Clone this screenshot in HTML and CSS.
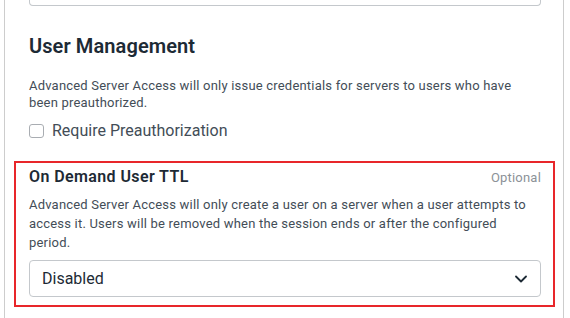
FILE: index.html
```html
<!DOCTYPE html>
<html lang="en">
<head>
    <meta charset="UTF-8">
    <meta name="viewport" content="width=device-width, initial-scale=1.0">
    <title>Server Access Settings</title>
    <link rel="stylesheet" href="styles.css">
</head>
<body>
    <div class="card">
        <div class="input-stub"></div>

        <div class="section">
            <h2>User Management</h2>
            <p class="help">Advanced Server Access will only issue credentials for servers to users who have been preauthorized.</p>
            <label class="checkbox">
                <input type="checkbox" id="preauth">
                <span>Require Preauthorization</span>
            </label>
        </div>

        <div class="field highlighted">
            <div class="field-header">
                <label for="ttl">On Demand User TTL</label>
                <span class="optional">Optional</span>
            </div>
            <p class="help">Advanced Server Access will only create a user on a server when a user attempts to access it. Users will be removed when the session ends or after the configured period.</p>
            <div class="select-wrap">
                <select id="ttl">
                    <option>Disabled</option>
                    <option>1 hour</option>
                    <option>8 hours</option>
                    <option>24 hours</option>
                </select>
                <svg class="chevron" width="12" height="8" viewBox="0 0 12 8">
                    <polyline points="1,1.5 6,6.5 11,1.5" fill="none" stroke="#1d2a35" stroke-width="1.8" stroke-linecap="round" stroke-linejoin="round"/>
                </svg>
            </div>
        </div>
    </div>
</body>
</html>
```

FILE: styles.css
```css
:root {
    --heading-color: #1d2a35;
    --text-color: #434d57;
    --muted-color: #8c9298;
    --border-color: #c4c8cc;
    --card-border: #cdcdcd;
    --highlight: #e8262a;
}

body {
    margin: 0;
    font-family: Roboto, "Noto Sans", sans-serif;
    color: var(--text-color);
    background: white;
    overflow: hidden;
}

.card {
    margin: 0 6px 0 4px;
    padding: 0 8px 40px 9px;
    border-left: 1px solid var(--card-border);
    border-right: 1px solid var(--card-border);
    height: 318px;
    box-sizing: border-box;
}

.input-stub {
    margin: 0 14px 0 15px;
    height: 5px;
    border: 1px solid var(--border-color);
    border-top: none;
    border-radius: 0 0 4px 4px;
}

.section {
    padding: 28px 14px 0 15px;
}

h2 {
    margin: 0;
    font-size: 20px;
    line-height: 24px;
    font-weight: 600;
    letter-spacing: 0.1px;
    color: var(--heading-color);
}

.help {
    margin: 0;
    font-size: 13px;
    line-height: 18px;
    letter-spacing: 0.2px;
}

.section .help {
    margin-top: 19px;
    line-height: 17px;
}

.checkbox {
    display: flex;
    align-items: center;
    gap: 8px;
    margin-top: 10px;
    font-size: 16px;
    line-height: 20px;
}

.checkbox input {
    appearance: none;
    margin: 0;
    width: 15px;
    height: 14px;
    border: 1.5px solid #a9adb2;
    border-radius: 3px;
}

.field {
    padding: 4px 14px 8px 15px;
}

.field.highlighted {
    margin: 20px 0 0 0;
    padding: 4px 12px 8px 13px;
    border: 2px solid var(--highlight);
}

.field-header {
    display: flex;
    justify-content: space-between;
    align-items: baseline;
}

.field-header label {
    font-size: 16px;
    line-height: 20px;
    font-weight: 600;
    letter-spacing: 0.4px;
    color: var(--heading-color);
}

.optional {
    font-size: 13px;
    letter-spacing: 0.2px;
    color: var(--muted-color);
}

.field .help {
    margin-top: 8px;
    line-height: 19px;
}

.select-wrap {
    position: relative;
    margin-top: 8px;
}

select {
    appearance: none;
    width: 100%;
    height: 37px;
    padding: 0 12px;
    font-family: inherit;
    font-size: 16px;
    color: var(--heading-color);
    background: white;
    border: 1px solid var(--border-color);
    border-radius: 4px;
}

.chevron {
    position: absolute;
    right: 14px;
    top: 15px;
    pointer-events: none;
}
```
